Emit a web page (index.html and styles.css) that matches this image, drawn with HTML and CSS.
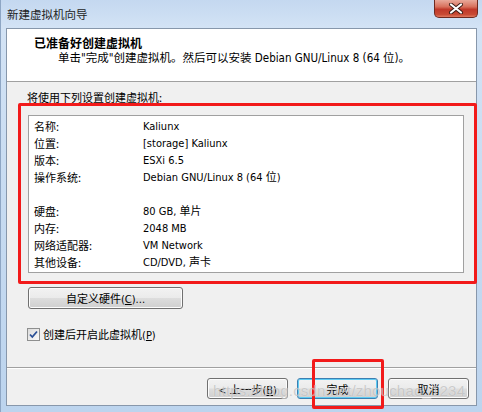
FILE: index.html
```html
<!DOCTYPE html>
<html lang="zh-CN">
<head>
<meta charset="utf-8">
<link rel="stylesheet" href="styles.css">
</head>
<body>
<div class="window">
  <div class="titlebar">
    <span class="title">新建虚拟机向导</span>
    <div class="close"><svg width="16" height="11" viewBox="0 0 16 11"><path d="M3 1.5 L13 9.5 M13 1.5 L3 9.5" stroke="#3a1a14" stroke-width="4" stroke-linecap="round"/><path d="M3 1.5 L13 9.5 M13 1.5 L3 9.5" stroke="#ffffff" stroke-width="2.2" stroke-linecap="round"/></svg></div>
  </div>
  <div class="client">
    <div class="header">
      <div class="h-title">已准备好创建虚拟机</div>
      <div class="h-sub">单击"完成"创建虚拟机。然后可以安装 Debian GNU/Linux 8 (64 位)。</div>
    </div>
    <div class="body">
      <div class="caption">将使用下列设置创建虚拟机:</div>
      <div class="listbox">
        <div class="row"><span class="k">名称:</span><span class="v">Kaliunx</span></div>
        <div class="row"><span class="k">位置:</span><span class="v">[storage] Kaliunx</span></div>
        <div class="row"><span class="k">版本:</span><span class="v">ESXi 6.5</span></div>
        <div class="row"><span class="k">操作系统:</span><span class="v">Debian GNU/Linux 8 (64 位)</span></div>
        <div class="row gap"></div>
        <div class="row"><span class="k">硬盘:</span><span class="v">80 GB, 单片</span></div>
        <div class="row"><span class="k">内存:</span><span class="v">2048 MB</span></div>
        <div class="row"><span class="k">网络适配器:</span><span class="v">VM Network</span></div>
        <div class="row"><span class="k">其他设备:</span><span class="v">CD/DVD, 声卡</span></div>
      </div>
      <div class="btn custom"><span>自定义硬件(<u>C</u>)...</span></div>
      <label class="check"><span class="box"><svg width="9" height="9" viewBox="0 0 9 9"><path d="M1 4.5 L3.3 7 L8 1.5" fill="none" stroke="#2a4f96" stroke-width="1.8"/></svg></span><span class="check-text">创建后开启此虚拟机(<u>P</u>)</span></label>
    </div>
    <div class="footer">
      <div class="btn nav"><span>&lt; 上一步(<u>B</u>)</span></div>
      <div class="btn nav default"><span>完成</span></div>
      <div class="btn nav"><span>取消</span></div>
    </div>
  </div>
  <div class="mark mark-list"></div>
  <div class="mark mark-finish"></div>
  <div class="watermark">https://blog.csdn.net/zhouchao_1234</div>
</div>
</body>
</html>
```
FILE: styles.css
```css
html, body {
  margin: 0;
  padding: 0;
}
body {
  width: 482px;
  height: 412px;
  overflow: hidden;
  font-family: "DejaVu Sans Condensed", "DejaVu Sans", "Noto Sans CJK SC", sans-serif;
  font-size: 11px;
  color: #000;
}
.window {
  position: relative;
  width: 482px;
  height: 412px;
  box-sizing: border-box;
  background: linear-gradient(180deg, #c4d8f0 0px, #d3e3f5 28px, #c7dbf1 200px, #bcd4ee 412px);
  border-left: 1px solid #8ea6c4;
  display: flex;
  flex-direction: column;
}
.titlebar {
  height: 28px;
  display: flex;
  align-items: flex-start;
  padding: 0 4px 0 6px;
}
.title {
  font-family: "Noto Sans CJK SC", sans-serif;
  font-size: 11.5px;
  line-height: 12px;
  margin-top: 8px;
  color: #1e1e1e;
}
.close {
  margin-left: auto;
  width: 44px;
  height: 18px;
  box-sizing: border-box;
  border: 1px solid #6e2a20;
  border-top: none;
  border-radius: 0 0 5px 5px;
  background: linear-gradient(180deg, #e9a99a 0%, #d8705c 40%, #c0392a 55%, #c84a34 85%, #e07a60 100%);
  display: flex;
  align-items: center;
  justify-content: center;
}
.client {
  margin: 0 5px 6px 5px;
  flex: 1;
  border: 1px solid #8797ab;
  background: #f0f0f0;
  display: flex;
  flex-direction: column;
}
.header {
  height: 53px;
  background: #fff;
  border-bottom: 1px solid #a0a0a0;
  box-sizing: border-box;
  font-family: "Noto Sans CJK SC", sans-serif;
  font-size: 12px;
}
.h-title {
  font-weight: bold;
  padding-left: 27px;
  margin-top: 6px;
  line-height: 15px;
}
.h-sub {
  padding-left: 51px;
  margin-top: 1px;
  line-height: 15px;
  font-family: "DejaVu Sans Condensed", "Noto Sans CJK SC", sans-serif;
  font-size: 11.5px;
}
.body {
  flex: 1;
  padding: 8px 10px 0 20px;
  border-bottom: 1px solid #a0a0a0;
  display: flex;
  flex-direction: column;
  align-items: flex-start;
}
.caption {
  line-height: 14px;
  font-family: "Noto Sans CJK SC", sans-serif;
  font-size: 11px;
}
.listbox {
  margin-top: 11px;
  margin-left: 1px;
  width: 436px;
  height: 158px;
  box-sizing: border-box;
  border: 1px solid #a0a0a0;
  background: #fff;
  padding: 2px 0 0 5px;
}
.row {
  display: flex;
  height: 17px;
  line-height: 17px;
}
.row .k {
  width: 109px;
  font-family: "Noto Sans CJK SC", sans-serif;
  font-size: 11px;
}
.btn {
  box-sizing: border-box;
  border: 1px solid #707070;
  border-radius: 3px;
  background: linear-gradient(180deg, #f2f2f2 0%, #ebebeb 48%, #dddddd 52%, #cfcfcf 100%);
  box-shadow: inset 0 0 0 1px #fcfcfc;
  display: flex;
  align-items: center;
  justify-content: center;
  height: 22px;
}
.custom {
  margin-top: 14px;
  margin-left: 1px;
  width: 155px;
}
.check {
  margin-top: 17px;
  display: flex;
  align-items: center;
  gap: 3px;
}
.box {
  width: 13px;
  height: 13px;
  box-sizing: border-box;
  border: 1px solid #8e8f8f;
  background: linear-gradient(135deg, #dcdcdc, #fafafa);
  display: flex;
  align-items: center;
  justify-content: center;
}
.footer {
  height: 37px;
  display: flex;
  justify-content: flex-end;
  align-items: flex-start;
  padding: 9px 7px 0 0;
  gap: 9px;
  border-top: 1px solid #fff;
  box-sizing: border-box;
}
.nav {
  width: 81px;
  height: 21px;
}
.default {
  border-color: #3c7fb1;
  box-shadow: inset 0 0 0 1px #5ecbf3;
  margin-right: 1px;
}
.mark {
  position: absolute;
  border: 3px solid #f21a1a;
  border-radius: 2px;
  box-sizing: border-box;
}
.mark-list {
  left: 17px;
  top: 103px;
  width: 459px;
  height: 181px;
}
.mark-finish {
  left: 311px;
  top: 359px;
  width: 72px;
  height: 50px;
}
.watermark {
  position: absolute;
  left: 212px;
  top: 382px;
  font-family: "Liberation Sans", sans-serif;
  font-size: 15px;
  color: rgba(160, 160, 160, 0.5);
  text-shadow: 0 0 1px rgba(255,255,255,0.7);
  letter-spacing: 0.2px;
  white-space: nowrap;
}
```
